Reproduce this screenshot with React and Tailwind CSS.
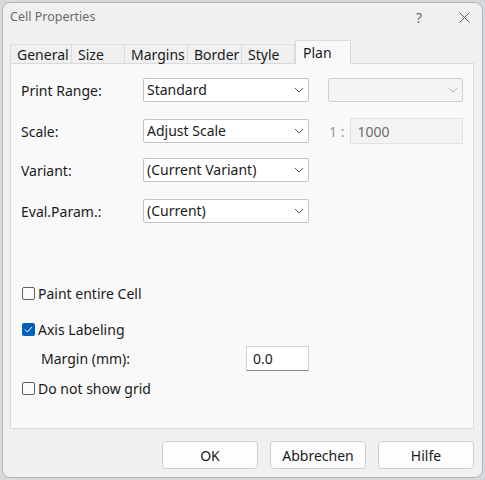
import React from 'react';

const font = { fontFamily: '"Noto Sans", "Liberation Sans", sans-serif' };

const Chevron = ({ light }) => (
  <svg width="10" height="6" viewBox="0 0 10 6" className="shrink-0">
    <path d="M1 1 L5 5 L9 1" fill="none" stroke={light ? '#b8b8b8' : '#5a5a5a'} strokeWidth="1" />
  </svg>
);

const Select = ({ value, width = 'w-[166px]', disabled }) => (
  <div
    className={`${width} h-[24px] flex items-center justify-between pl-[3px] pr-[4px] border rounded-[2px] ${
      disabled ? 'bg-[#f4f4f4] border-[#cfcfcf]' : 'bg-white border-[#c4c4c4]'
    }`}
  >
    <span className="text-[14px] text-[#1a1a1a] leading-none">{value}</span>
    <Chevron light={disabled} />
  </div>
);

const Row = ({ label, children, className = '' }) => (
  <div className={`flex items-center ${className}`}>
    <span className="w-[122px] text-[14px] text-[#1a1a1a]">{label}</span>
    {children}
  </div>
);

const Check = ({ checked, label, className = '' }) => (
  <div className={`flex items-center h-[20px] ${className}`}>
    {checked ? (
      <span className="w-[13px] h-[13px] ml-[1px] rounded-[2px] bg-[#005fb8] flex items-center justify-center">
        <svg width="9" height="7" viewBox="0 0 9 7">
          <path d="M1 3.5 L3.5 6 L8 1" fill="none" stroke="white" strokeWidth="1" />
        </svg>
      </span>
    ) : (
      <span className="w-[13px] h-[13px] ml-[1px] rounded-[2px] border border-[#5f5f5f] bg-[#fbfbfb]" />
    )}
    <span className="ml-[3px] text-[14px] text-[#1a1a1a]">{label}</span>
  </div>
);

const tabs = [
  { name: 'General', w: 'w-[62px]' },
  { name: 'Size', w: 'w-[53px]' },
  { name: 'Margins', w: 'w-[63px]' },
  { name: 'Border', w: 'w-[54px]' },
  { name: 'Style', w: 'w-[53px]' },
];

const Button = ({ children }) => (
  <div className="w-[96px] h-[28px] flex items-center justify-center bg-[#fdfdfd] border border-[#d0d0d0] rounded-[4px] text-[14px] text-[#1a1a1a]">
    {children}
  </div>
);

export default function App() {
  return (
    <div className="w-[485px] h-[480px] bg-[#d6dadd] pt-[2px] px-[2px] pb-[2px]" style={font}>
      <div className="h-full flex flex-col bg-[#f0f0f0] border border-[#b5b5b5] rounded-[8px] overflow-hidden">
        {/* title bar */}
        <div className="h-[29px] flex items-center pl-[7px] pr-[12px] shrink-0">
          <span className="text-[12.5px] text-[#6a6a6a]">Cell Properties</span>
          <span className="ml-auto text-[14px] text-[#6a6a6a] mr-[37px]">?</span>
          <svg width="11" height="11" viewBox="0 0 11 11">
            <path d="M0.5 0.5 L10.5 10.5 M10.5 0.5 L0.5 10.5" stroke="#5a5a5a" strokeWidth="1" />
          </svg>
        </div>

        <div className="flex-1 flex flex-col pl-[7px] pr-[8px] pt-[8px]">
          {/* tabs */}
          <div className="flex items-end h-[23px] relative z-10">
            {tabs.map((t, i) => (
              <div
                key={t.name}
                className={`${t.w} h-[19px] flex items-center pl-[6px] border-t border-[#e2e2e2] ${
                  i === 0 ? 'border-l' : ''
                } border-r border-r-[#dadada] border-l-[#dadada] text-[14px] text-[#1a1a1a] bg-[#f0f0f0]`}
              >
                {t.name}
              </div>
            ))}
            <div className="w-[56px] h-[24px] -mb-[1px] flex items-start pt-[1px] pl-[7px] bg-[#f9f9f9] border border-b-0 border-[#dadada] text-[14px] text-[#1a1a1a]">
              Plan
            </div>
          </div>

          {/* panel */}
          <div className="h-[366px] bg-[#f9f9f9] border border-[#dadada] pt-[14px] pl-[10px] flex flex-col">
            <Row label="Print Range:">
              <Select value="Standard" />
              <div className="ml-[19px]">
                <Select value="" width="w-[135px]" disabled />
              </div>
            </Row>
            <Row label="Scale:" className="mt-[16px]">
              <Select value="Adjust Scale" />
              <span className="ml-[20px] text-[14px] text-[#9a9a9a]">1 :</span>
              <div className="ml-[6px] w-[113px] h-[26px] flex items-center pl-[6px] bg-[#f3f3f3] border border-[#e2e2e2] text-[14px] text-[#6d6d6d]">
                1000
              </div>
            </Row>
            <Row label="Variant:" className="mt-[14px]">
              <Select value="(Current Variant)" />
            </Row>
            <Row label="Eval.Param.:" className="mt-[17px]">
              <Select value="(Current)" />
            </Row>

            <Check label="Paint entire Cell" className="mt-[60px]" />
            <Check checked label="Axis Labeling" className="mt-[16px]" />
            <div className="flex items-center mt-[7px]">
              <span className="w-[225px] pl-[20px] text-[14px] text-[#1a1a1a]">Margin (mm):</span>
              <div className="w-[63px] h-[25px] flex items-center pl-[6px] bg-white border border-[#d4d4d4] border-b-[#8a8a8a] text-[14px] text-[#1a1a1a]">
                0.0
              </div>
            </div>
            <Check label="Do not show grid" className="mt-[7px]" />
          </div>

          {/* buttons */}
          <div className="flex justify-end gap-[12px] mt-[12px]">
            <Button>OK</Button>
            <Button>Abbrechen</Button>
            <Button>Hilfe</Button>
          </div>
        </div>
      </div>
    </div>
  );
}
